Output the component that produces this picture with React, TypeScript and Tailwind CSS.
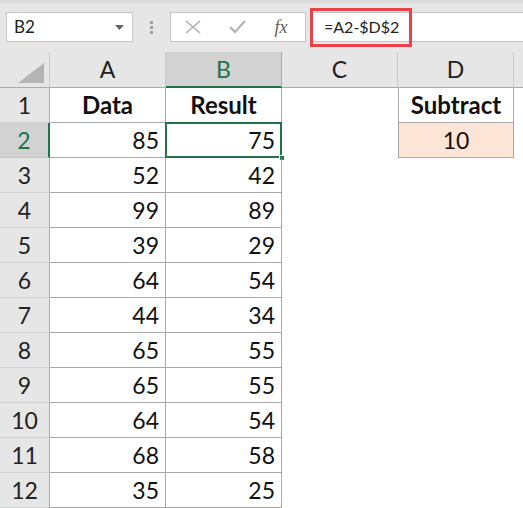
import React from 'react';

const data: [number, number][] = [
  [85, 75],
  [52, 42],
  [99, 89],
  [39, 29],
  [64, 54],
  [44, 34],
  [65, 55],
  [65, 55],
  [64, 54],
  [68, 58],
  [35, 25],
];

const font = { fontFamily: 'Lato, "Open Sans", sans-serif' };

const Toolbar: React.FC = () => (
  <div className="h-[52px] bg-[#e6e6e6] border-t-[3px] border-[#dcdcdc] flex items-start pt-[9px] pl-[6px]">
    <div className="w-[127px] h-[30px] bg-white border border-[#c6c6c6] flex items-center justify-between pl-[7px] pr-[8px]">
      <span className="text-[17px] text-[#222]">B2</span>
      <svg width="9" height="5" viewBox="0 0 9 5">
        <path d="M0 0h9L4.5 5z" fill="#666" />
      </svg>
    </div>
    <div className="w-[37px] h-[30px] flex flex-col items-center justify-center gap-[2px]">
      <span className="w-[3px] h-[3px] bg-[#a0a0a0]" />
      <span className="w-[3px] h-[3px] bg-[#a0a0a0]" />
      <span className="w-[3px] h-[3px] bg-[#a0a0a0]" />
    </div>
    <div className="w-[136px] h-[30px] bg-white border border-[#c6c6c6] flex items-center">
      <div className="w-[44px] flex justify-center">
        <svg width="16" height="14" viewBox="0 0 16 14">
          <path d="M1 1l14 12M15 1L1 13" stroke="#b0b0b0" strokeWidth="1.6" fill="none" />
        </svg>
      </div>
      <div className="w-[44px] flex justify-center">
        <svg width="17" height="14" viewBox="0 0 17 14">
          <path d="M1 7l5 5L16 1" stroke="#b0b0b0" strokeWidth="2" fill="none" />
        </svg>
      </div>
      <div className="w-[44px] flex justify-center">
        <span
          className="italic text-[18px] text-[#606060]"
          style={{ fontFamily: '"Liberation Serif", serif' }}
        >
          fx
        </span>
      </div>
    </div>
    <div className="ml-[4px] flex-1 h-[30px] bg-white border-y border-[#c6c6c6] relative flex items-center pl-[14px]">
      <span className="text-[16px] text-[#222]">=A2-$D$2</span>
      <div className="absolute left-0 top-[-5px] w-[102px] h-[39px] border-[3px] border-[#ec4148]" />
    </div>
  </div>
);

const App: React.FC = () => {
  const colHead = 'h-[36px] bg-[#e6e6e6] border-r border-[#cacaca] border-b border-b-[#ababab] flex items-center justify-center text-[23px] text-[#222]';
  const rowHead = 'h-[35px] bg-[#e6e6e6] border-r border-r-[#ababab] border-b border-[#d0d0d0] flex items-center justify-center text-[23px] text-[#222]';
  const cell = 'h-[35px] border-r border-b border-[#a8a8a8] flex items-center text-[23px] text-[#111]';

  return (
    <div className="w-[523px] h-[508px] overflow-hidden bg-white" style={font}>
      <Toolbar />
      <div className="grid grid-cols-[50px_116px_116px_116px_116px_9px]">
        {/* header row */}
        <div className="h-[36px] bg-[#e6e6e6] border-r border-[#cacaca] border-b border-b-[#ababab] flex items-end justify-end pr-[5px] pb-[4px]">
          <svg width="26" height="20" viewBox="0 0 26 20">
            <path d="M26 0V20H0z" fill="#b4b4b4" />
          </svg>
        </div>
        <div className={colHead}>A</div>
        <div className="h-[36px] bg-[#d2d2d2] border-r border-[#ababab] border-b-2 border-b-[#217346] flex items-center justify-center text-[23px] text-[#217346]">
          B
        </div>
        <div className={colHead}>C</div>
        <div className={colHead}>D</div>
        <div className="h-[36px] bg-[#e6e6e6] border-b border-[#ababab]" />

        {/* row 1 */}
        <div className={rowHead}>1</div>
        <div className={`${cell} justify-center font-bold text-[24px]`}>Data</div>
        <div className={`${cell} justify-center font-bold text-[24px]`}>Result</div>
        <div className="h-[35px]" />
        <div className={`${cell} border-l justify-center font-bold text-[24px]`}>Subtract</div>
        <div className="h-[35px]" />

        {data.map(([a, b], i) => {
          const row = i + 2;
          const sel = row === 2;
          return (
            <React.Fragment key={row}>
              <div
                className={
                  sel
                    ? 'h-[35px] bg-[#d2d2d2] border-r-2 border-r-[#217346] border-b border-[#c4c4c4] flex items-center justify-center text-[23px] text-[#217346]'
                    : rowHead
                }
              >
                {row}
              </div>
              <div className={`${cell} justify-end pr-[6px]`}>{a}</div>
              <div className={`${cell} justify-end pr-[6px] relative`}>
                {b}
                {sel && (
                  <>
                    <div className="absolute left-[-1px] top-[-1px] right-[-1px] bottom-[-1px] border-2 border-[#217346]" />
                    <div className="absolute right-[-4px] bottom-[-4px] w-[6px] h-[6px] bg-[#217346] border border-white" />
                  </>
                )}
              </div>
              <div className="h-[35px]" />
              {sel ? (
                <div className={`${cell} border-l bg-[#fce4d6] justify-center`}>10</div>
              ) : (
                <div className="h-[35px]" />
              )}
              <div className="h-[35px]" />
            </React.Fragment>
          );
        })}
      </div>
    </div>
  );
};

export default App;
